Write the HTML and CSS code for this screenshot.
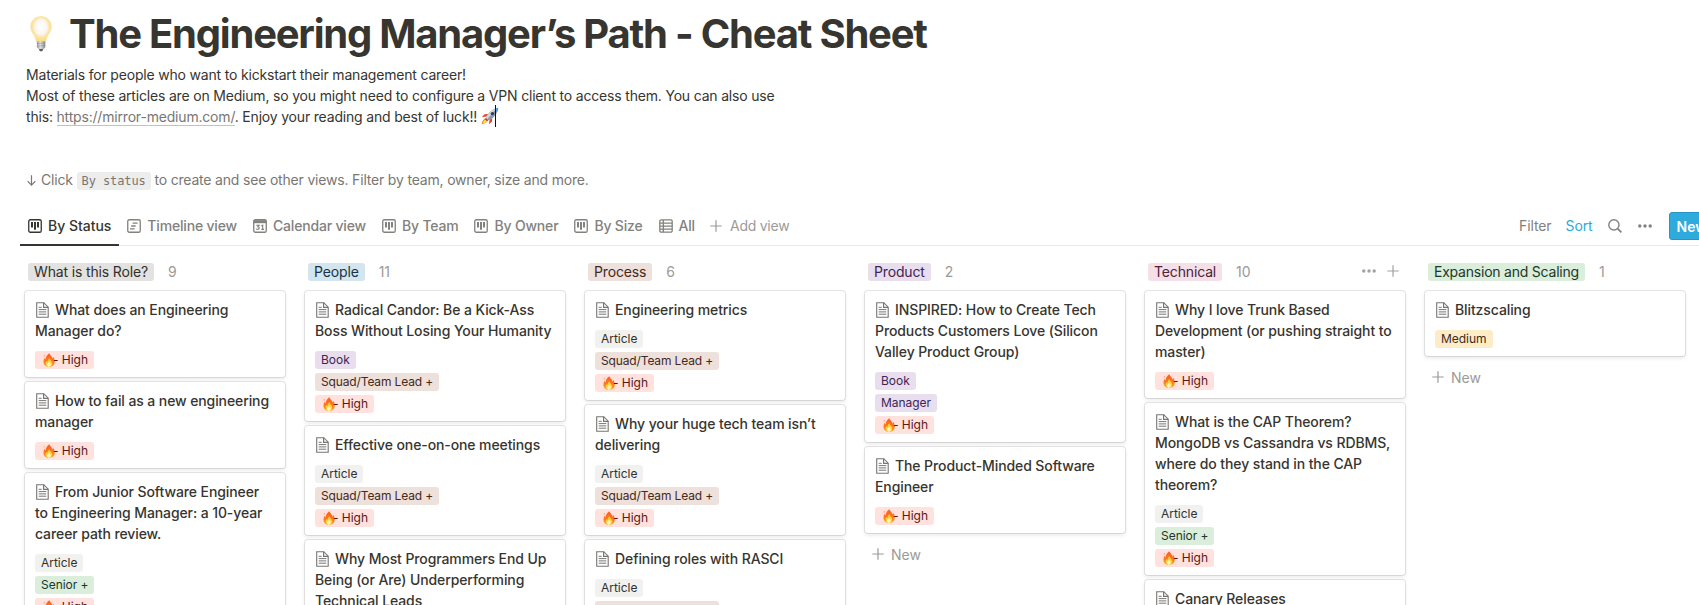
FILE: index.html
```html
<!DOCTYPE html>
<html lang="en">
<head>
    <meta charset="UTF-8">
    <meta name="viewport" content="width=device-width, initial-scale=1.0">
    <title>The Engineering Manager’s Path - Cheat Sheet</title>
    <link rel="stylesheet" href="styles.css">
</head>
<body>
    <!-- Shared icons -->
    <svg class="sprite" width="0" height="0">
        <defs>
            <linearGradient id="flame" x1="0" y1="0" x2="0" y2="1">
                <stop offset="0" stop-color="#ff5a22"/>
                <stop offset="0.6" stop-color="#ff7a1c"/>
                <stop offset="1" stop-color="#ffa51f"/>
            </linearGradient>
            <radialGradient id="glass" cx="0.5" cy="0.42" r="0.55">
                <stop offset="0" stop-color="#ffffff"/>
                <stop offset="0.55" stop-color="#f8f6ef"/>
                <stop offset="0.68" stop-color="#fbe9b4"/>
                <stop offset="1" stop-color="#fbdc84"/>
            </radialGradient>
            <linearGradient id="socket" x1="0" y1="0" x2="1" y2="0">
                <stop offset="0" stop-color="#999"/>
                <stop offset="0.4" stop-color="#e2e2e2"/>
                <stop offset="1" stop-color="#8a8a8a"/>
            </linearGradient>
        </defs>
        <symbol id="board" viewBox="0 0 14 14">
            <rect x="0.75" y="0.75" width="12.5" height="12.5" rx="1.6" fill="none" stroke="currentColor" stroke-width="1.3"/>
            <path d="M3 3h2v5.6H3zM6 3h2v7.7H6zM9 3h2v5.6H9z" fill="currentColor"/>
        </symbol>
        <symbol id="timeline" viewBox="0 0 14 14">
            <rect x="0.75" y="0.75" width="12.5" height="12.5" rx="1.6" fill="none" stroke="currentColor" stroke-width="1.3"/>
            <path d="M5.6 4.1h5M4.2 7h4.4M3 9.9h4.6" fill="none" stroke="currentColor" stroke-width="1.3"/>
        </symbol>
        <symbol id="calendar" viewBox="0 0 14 14">
            <rect x="0.75" y="0.75" width="12.5" height="12.5" rx="1.6" fill="none" stroke="currentColor" stroke-width="1.3"/>
            <path d="M0.6 1.2h12.8v3H0.6z" fill="currentColor"/>
            <path d="M3.2 6.2h2.9L4.8 7.8c2.1 0 1.7 2.6-.2 2.6-.8 0-1.3-.3-1.5-.8M8.2 7l1.5-.8v4.3M8.3 10.4h2.7" fill="none" stroke="currentColor" stroke-width="1.1"/>
        </symbol>
        <symbol id="table" viewBox="0 0 14 14">
            <path d="M2.3 0.8h9.4a1.5 1.5 0 0 1 1.5 1.5v9.4a1.5 1.5 0 0 1-1.5 1.5H2.3a1.5 1.5 0 0 1-1.5-1.5V2.3A1.5 1.5 0 0 1 2.3 0.8zM0.8 4.1h12.4M0.8 7.1h12.4M0.8 10.1h12.4M4.3 0.8v12.4" fill="none" stroke="currentColor" stroke-width="1.3"/>
        </symbol>
        <symbol id="plus" viewBox="0 0 12 12">
            <path d="M6 0.3v11.4M0.3 6h11.4" fill="none" stroke="currentColor" stroke-width="1.2"/>
        </symbol>
        <symbol id="dots" viewBox="0 0 14 4">
            <circle cx="1.8" cy="2" r="1.7"/><circle cx="7" cy="2" r="1.7"/><circle cx="12.2" cy="2" r="1.7"/>
        </symbol>
        <symbol id="page" viewBox="0 0 13 16">
            <path d="M0.7 0.7h7.1l4.4 4.5v10H0.7z" fill="none" stroke="currentColor" stroke-width="1.1"/>
            <path d="M7.6 0.7v4.7h4.6" fill="none" stroke="currentColor" stroke-width="1.2"/>
            <path d="M2.7 5.3h3M2.7 7.6h7.6M2.7 9.9h7.6M2.7 12.2h7.6" fill="none" stroke="currentColor" stroke-width="1"/>
        </symbol>
        <symbol id="fire" viewBox="0 0 12 14">
            <path d="M6.3 0.2c.5 1.9 2.9 3.2 3.4 5.3.5-.5.6-1 .5-1.7 1.9 2.6 2 5.9.6 7.9-1 1.4-2.7 2.2-4.8 2.2-2.9 0-5-1.7-5.4-4.2-.3-1.8.2-3.6 1-4.9.2.9.5 1.3 1 1.6-.1-2.5 1.6-4.6 3.7-6.2z" fill="url(#flame)"/>
            <path d="M6.2 4.9c.3 1.9 2.8 2.9 3 5.3.1 2.1-1.3 3.6-3.2 3.6s-3.4-1.3-3.4-3.2c0-1.2.5-2 1-2.6.1.7.4 1 .8 1.1.2-1.5.9-3 1.8-4.2z" fill="#ffd23c"/>
            <path d="M6.1 8.6c.4 1.2 1.7 1.7 1.7 3.2 0 1.2-.8 2-1.9 2s-1.8-.8-1.8-1.8c0-1.5 1.5-2 2-3.4z" fill="#fff6bd"/>
            <path d="M0.6 3.2l.8-1.7.1 1.9z" fill="#ff7a1c"/>
        </symbol>
    </svg>

    <header class="page-header">
        <h1>
            <svg class="bulb" viewBox="0 0 22 36" width="22" height="36">
                <path d="M11 .7C4.9.7.8 5.2.8 10.7c0 3.7 1.9 5.9 3.5 8.6 1.2 2.1 1.6 4.3 2.2 6.2h9c.6-1.9 1-4.1 2.2-6.2 1.6-2.7 3.5-4.9 3.5-8.6C21.2 5.2 17.1.7 11 .7z" fill="url(#glass)" stroke="#fae19c" stroke-width="1"/>
                <path d="M6.9 25.3h8.4v6.2l-2 1.7H9l-2.1-1.7z" fill="url(#socket)"/>
                <path d="M6.9 27.7l8.4-.8M6.9 30.2l8.4-.8" stroke="#777" stroke-width=".6" opacity=".6"/>
                <path d="M8.9 33.1h4.3l-.9 2.1h-2.5z" fill="#5c5c5c"/>
            </svg>
            <span>The Engineering Manager’s Path - Cheat Sheet</span>
        </h1>
        <p class="intro">
            Materials for people who want to kickstart their management career!<br>
            Most of these articles are on Medium, so you might need to configure a VPN client to access them. You can also use<br>
            this: <a href="#">https://mirror-medium.com/</a>. Enjoy your reading and best of luck!!
            <svg class="rocket" viewBox="0 0 18 18" width="18" height="18">
                <path d="M5.3 9.6L.8 10.3l2.7-3.1 3.8-.2zM8.6 12.8l-.7 4.5 3.1-2.8.2-3.7z" fill="#e8412c"/>
                <path d="M5 11.2c-2.2.2-3.9 2.5-4.5 6.1 3.6-.4 5.9-2 6.3-4.3z" fill="#ff8a1e"/>
                <path d="M5 12.4c-1.6.4-2.7 1.9-3.2 4 2-.3 3.5-1.4 4-3z" fill="#ffe14d"/>
                <path d="M4.8 11.3C6.5 6.5 10.5 2 17.3.7 16.4 7.3 12 11.7 7 13.5z" fill="#8f9aa8"/>
                <path d="M5.5 10.2C7.4 6 11 2.5 15.5 1.3L6 12.5z" fill="#cfd6dc"/>
                <path d="M13.2 2.1l2.9 2.9c.7-1.3 1.1-2.8 1.2-4.3-1.4.1-2.8.6-4.1 1.4z" fill="#4ba3e3"/>
                <circle cx="11.4" cy="6.6" r="1.7" fill="#29415e"/>
                <path d="M4.7 11.1l2.4 2.5-1.2.5-1.7-1.7z" fill="#c62c20"/>
            </svg><span class="caret"></span>
        </p>
        <p class="hint"><svg class="arrow" width="9" height="11" viewBox="0 0 9 11"><path d="M4.5.3v9.7M.6 6.1l3.9 4 3.9-4" fill="none" stroke="currentColor" stroke-width="1.2"/></svg>Click <code>By status</code> to create and see other views. Filter by team, owner, size and more.</p>
    </header>

    <nav class="tabs">
        <a class="tab active"><svg><use href="#board"/></svg>By Status</a>
        <a class="tab"><svg><use href="#timeline"/></svg>Timeline view</a>
        <a class="tab"><svg><use href="#calendar"/></svg>Calendar view</a>
        <a class="tab"><svg><use href="#board"/></svg>By Team</a>
        <a class="tab"><svg><use href="#board"/></svg>By Owner</a>
        <a class="tab"><svg><use href="#board"/></svg>By Size</a>
        <a class="tab"><svg><use href="#table"/></svg>All</a>
        <a class="add-view"><svg><use href="#plus"/></svg>Add view</a>
        <div class="tools">
            <span class="filter">Filter</span>
            <span class="sort">Sort</span>
            <svg class="search" viewBox="0 0 14 14"><circle cx="5.9" cy="5.9" r="5.1" fill="none" stroke="currentColor" stroke-width="1.4"/><path d="M9.6 9.6l3.8 3.8" stroke="currentColor" stroke-width="1.7"/></svg>
            <svg class="more"><use href="#dots"/></svg>
            <button class="new-btn">New</button>
        </div>
    </nav>

    <main class="board">
        <section class="column">
            <div class="column-head"><span class="status gray">What is this Role?</span><span class="count">9</span></div>
            <article class="card">
                <h3><svg><use href="#page"/></svg>What does an Engineering Manager do?</h3>
                <span class="tag red"><svg><use href="#fire"/></svg>- High</span>
            </article>
            <article class="card">
                <h3><svg><use href="#page"/></svg>How to fail as a new engineering manager</h3>
                <span class="tag red"><svg><use href="#fire"/></svg>- High</span>
            </article>
            <article class="card">
                <h3><svg><use href="#page"/></svg>From Junior Software Engineer to Engineering Manager: a 10-year career path review.</h3>
                <span class="tag light">Article</span>
                <span class="tag green">Senior +</span>
                <span class="tag red"><svg><use href="#fire"/></svg>- High</span>
            </article>
        </section>

        <section class="column">
            <div class="column-head"><span class="status blue">People</span><span class="count">11</span></div>
            <article class="card">
                <h3><svg><use href="#page"/></svg>Radical Candor: Be a Kick-Ass Boss Without Losing Your Humanity</h3>
                <span class="tag purple">Book</span>
                <span class="tag brown">Squad/Team Lead +</span>
                <span class="tag red"><svg><use href="#fire"/></svg>- High</span>
            </article>
            <article class="card">
                <h3><svg><use href="#page"/></svg>Effective one-on-one meetings</h3>
                <span class="tag light">Article</span>
                <span class="tag brown">Squad/Team Lead +</span>
                <span class="tag red"><svg><use href="#fire"/></svg>- High</span>
            </article>
            <article class="card">
                <h3><svg><use href="#page"/></svg>Why Most Programmers End Up Being (or Are) Underperforming Technical Leads</h3>
            </article>
        </section>

        <section class="column">
            <div class="column-head"><span class="status brown">Process</span><span class="count">6</span></div>
            <article class="card">
                <h3><svg><use href="#page"/></svg>Engineering metrics</h3>
                <span class="tag light">Article</span>
                <span class="tag brown">Squad/Team Lead +</span>
                <span class="tag red"><svg><use href="#fire"/></svg>- High</span>
            </article>
            <article class="card">
                <h3><svg><use href="#page"/></svg>Why your huge tech team isn’t delivering</h3>
                <span class="tag light">Article</span>
                <span class="tag brown">Squad/Team Lead +</span>
                <span class="tag red"><svg><use href="#fire"/></svg>- High</span>
            </article>
            <article class="card">
                <h3><svg><use href="#page"/></svg>Defining roles with RASCI</h3>
                <span class="tag light">Article</span>
                <span class="tag brown">Squad/Team Lead +</span>
            </article>
        </section>

        <section class="column">
            <div class="column-head"><span class="status purple">Product</span><span class="count">2</span></div>
            <article class="card">
                <h3><svg><use href="#page"/></svg>INSPIRED: How to Create Tech Products Customers Love (Silicon Valley Product Group)</h3>
                <span class="tag purple">Book</span>
                <span class="tag purple">Manager</span>
                <span class="tag red"><svg><use href="#fire"/></svg>- High</span>
            </article>
            <article class="card">
                <h3><svg><use href="#page"/></svg>The Product-Minded Software Engineer</h3>
                <span class="tag red"><svg><use href="#fire"/></svg>- High</span>
            </article>
            <div class="add-card"><svg><use href="#plus"/></svg>New</div>
        </section>

        <section class="column">
            <div class="column-head">
                <span class="status pink">Technical</span><span class="count">10</span>
                <span class="actions"><svg class="more"><use href="#dots"/></svg><svg class="plus"><use href="#plus"/></svg></span>
            </div>
            <article class="card">
                <h3><svg><use href="#page"/></svg>Why I love Trunk Based Development (or pushing straight to master)</h3>
                <span class="tag red"><svg><use href="#fire"/></svg>- High</span>
            </article>
            <article class="card">
                <h3><svg><use href="#page"/></svg>What is the CAP Theorem? MongoDB vs Cassandra vs RDBMS, where do they stand in the CAP theorem?</h3>
                <span class="tag light">Article</span>
                <span class="tag green">Senior +</span>
                <span class="tag red"><svg><use href="#fire"/></svg>- High</span>
            </article>
            <article class="card">
                <h3><svg><use href="#page"/></svg>Canary Releases</h3>
            </article>
        </section>

        <section class="column">
            <div class="column-head"><span class="status green">Expansion and Scaling</span><span class="count">1</span></div>
            <article class="card">
                <h3><svg><use href="#page"/></svg>Blitzscaling</h3>
                <span class="tag yellow">Medium</span>
            </article>
            <div class="add-card"><svg><use href="#plus"/></svg>New</div>
        </section>
    </main>
</body>
</html>
```

FILE: styles.css
```css
* {
    margin: 0;
    padding: 0;
    box-sizing: border-box;
}

body {
    height: 605px;
    overflow: hidden;
    background: #fff;
    color: #37352f;
    font-family: Inter, "Liberation Sans", sans-serif;
    font-size: 14px;
    line-height: 21px;
}

svg {
    flex-shrink: 0;
}

.sprite {
    position: absolute;
}

/* Header */
.page-header {
    padding: 10px 26px 0;
    letter-spacing: -0.185px;
}

h1 {
    display: flex;
    height: 48px;
    margin-bottom: 6px;
    padding-left: 4px;
    font-size: 40px;
    font-weight: 700;
    line-height: 48px;
    letter-spacing: -1.22px;
    white-space: nowrap;
}

.bulb {
    margin: 6px 17px 0 0;
}

.intro {
    height: 63px;
    white-space: nowrap;
}

.intro a {
    color: #787774;
    text-decoration: none;
    border-bottom: 1px solid #c3c2c0;
}

.rocket {
    margin: 0 0 -3px 0;
}

.caret {
    display: inline-block;
    width: 1px;
    height: 22px;
    margin: -3px 0 -5px -4px;
    background: #111;
}

.hint {
    height: 21px;
    margin-top: 42px;
    color: #787774;
}

.arrow {
    margin: 0 5px -1px 1px;
}

code {
    padding: 2px 5px;
    border-radius: 3px;
    background: #ededec;
    font-family: "DejaVu Sans Mono", monospace;
    font-size: 12px;
    line-height: 1;
    letter-spacing: -0.1px;
}

/* View tabs */
.tabs {
    display: flex;
    align-items: stretch;
    height: 39px;
    margin-top: 17px;
    margin-left: 20px;
    border-bottom: 1px solid #e9e9e7;
    letter-spacing: -0.18px;
    white-space: nowrap;
}

.tab {
    display: flex;
    align-items: center;
    gap: 6px;
    padding: 0 8px 1px;
    color: #82817d;
    font-weight: 500;
}

.tab svg {
    width: 14px;
    height: 14px;
    margin-top: 1px;
}

.tab.active {
    height: 39px;
    padding-bottom: 0;
    border-bottom: 2px solid #37352f;
    color: #37352f;
    letter-spacing: -0.02px;
}

.add-view {
    display: flex;
    align-items: center;
    gap: 8px;
    padding: 0 0 1px 7px;
    color: #9b9a97;
    letter-spacing: -0.25px;
}

.add-view svg {
    width: 12px;
    height: 12px;
    margin-top: 1px;
}

.tools {
    display: flex;
    align-items: center;
    width: 180px;
    margin-left: auto;
    padding-bottom: 1px;
    color: #82817d;
    letter-spacing: -0.1px;
}

.sort {
    margin-left: 14px;
    color: #2eaadc;
}

.search {
    width: 14px;
    height: 14px;
    margin: 1px 0 0 15px;
}

.more {
    width: 14px;
    height: 4px;
    fill: currentColor;
}

.tools .more {
    margin: 1px 0 0 16px;
}

.new-btn {
    flex-shrink: 0;
    width: 60px;
    height: 28px;
    margin: 1px 0 0 17px;
    padding-left: 7px;
    border: 1px solid #2496c8;
    border-radius: 3px;
    background: #2eaadc;
    color: #fff;
    font: 600 14px Inter, sans-serif;
    text-align: left;
}

/* Board */
.board {
    display: flex;
    gap: 20px;
    padding: 17px 0 0 25px;
}

.column {
    flex: 0 0 260px;
}

.column-head {
    display: flex;
    align-items: center;
    height: 18px;
    margin-bottom: 10px;
    padding-left: 3px;
    letter-spacing: -0.15px;
    line-height: 18px;
}

.status {
    height: 18px;
    padding: 0 6px;
    border-radius: 3px;
}

.status.green {
    letter-spacing: -0.22px;
}

.count {
    margin-left: 14px;
    color: #9b9a97;
}

.actions {
    display: flex;
    align-items: center;
    gap: 11px;
    margin-left: auto;
    padding: 0 6px 2px 0;
    color: #a3a29f;
}

.plus {
    width: 12px;
    height: 12px;
}

.card {
    display: flex;
    flex-direction: column;
    align-items: flex-start;
    gap: 4px;
    margin-bottom: 5px;
    padding: 8px 10px;
    border-radius: 3px;
    background: #fff;
    box-shadow: 0 0 0 1px rgba(15, 15, 15, 0.1), 0 2px 4px rgba(15, 15, 15, 0.1);
}

.card h3 {
    margin-bottom: 6px;
    font-size: 14px;
    font-weight: 500;
    letter-spacing: -0.1px;
}

.card h3 svg {
    width: 13px;
    height: 16px;
    margin: 0 6px -3px 1px;
    color: #777673;
}

.tag {
    display: flex;
    align-items: center;
    height: 18px;
    padding: 0 6px;
    border-radius: 3px;
    font-size: 12px;
    line-height: 18px;
    letter-spacing: -0.03px;
    white-space: nowrap;
}

.tag svg {
    width: 12px;
    height: 14px;
    margin: 0 -2px 0 2px;
}

.tag.brown {
    letter-spacing: -0.14px;
}

.gray { background: #e3e2e0; color: #32302c; }
.light { background: #f1f1ef; color: #32302c; }
.blue { background: #d3e5ef; color: #183347; }
.brown { background: #eee0da; color: #442a1e; }
.purple { background: #e8deee; color: #412454; }
.pink { background: #f5e0e9; color: #4c2337; }
.green { background: #dbeddb; color: #1c3829; }
.yellow { background: #fdecc8; color: #402c1b; }
.red { background: #ffe2dd; color: #5d1715; }

.add-card {
    display: flex;
    align-items: center;
    gap: 7px;
    height: 32px;
    padding-left: 7px;
    color: #9b9a97;
}

.add-card svg {
    width: 12px;
    height: 12px;
}
```
